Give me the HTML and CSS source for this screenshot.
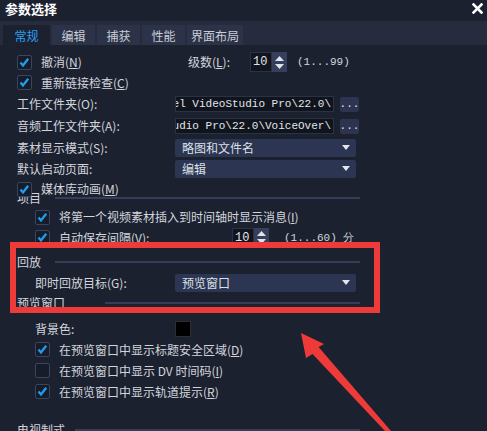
FILE: index.html
```html
<!DOCTYPE html>
<html lang="zh">
<head>
<meta charset="utf-8">
<title>参数选择</title>
<link rel="stylesheet" href="styles.css">
</head>
<body>
<div class="titlebar">
  <span class="title">参数选择</span>
  <svg class="close" width="11" height="11" viewBox="0 0 11 11"><path d="M1.5 1.5L9.5 9.5M9.5 1.5L1.5 9.5" stroke="#fff" stroke-width="2.6" stroke-linecap="square"/></svg>
</div>
<div class="tabbar">
  <div class="tab active t1">常规</div>
  <div class="tab t2">编辑</div>
  <div class="tab t2">捕获</div>
  <div class="tab t2">性能</div>
  <div class="tab t3">界面布局</div>
</div>
<div class="content">
  <div class="row h20">
    <span class="cb"><svg width="15" height="15" viewBox="0 0 15 15"><path d="M3.5 7.5L6 10.5L11.2 3.8" fill="none" stroke="#1e9df2" stroke-width="2.3"/></svg></span>
    <span class="lbl w147">撤消(<u>N</u>)</span>
    <span class="lbl w62">级数(<u>L</u>):</span>
    <span class="spin"><span class="spin-val">10</span><span class="spin-btn"><svg width="9" height="5" viewBox="0 0 9 5"><path d="M0 5L4.5 0L9 5Z" fill="#dfe3ea"/></svg><svg width="9" height="5" viewBox="0 0 9 5"><path d="M0 0L4.5 5L9 0Z" fill="#dfe3ea"/></svg></span></span>
    <span class="mono range">(1...99)</span>
  </div>
  <div class="row h21">
    <span class="cb"><svg width="15" height="15" viewBox="0 0 15 15"><path d="M3.5 7.5L6 10.5L11.2 3.8" fill="none" stroke="#1e9df2" stroke-width="2.3"/></svg></span>
    <span class="lbl">重新链接检查(<u>C</u>)</span>
  </div>
  <div class="row h22">
    <span class="flabel">工作文件夹(O):</span>
    <span class="path"><span>Corel VideoStudio Pro\22.0\</span></span>
    <span class="btn">...</span>
  </div>
  <div class="row h22">
    <span class="flabel">音频工作文件夹(A):</span>
    <span class="path"><span>Studio Pro\22.0\VoiceOver\</span></span>
    <span class="btn">...</span>
  </div>
  <div class="row h21">
    <span class="flabel">素材显示模式(S):</span>
    <span class="dd"><span>略图和文件名</span><svg width="8" height="5" viewBox="0 0 8 5"><path d="M0 0L4 5L8 0Z" fill="#e3e6ec"/></svg></span>
  </div>
  <div class="row h21">
    <span class="flabel">默认启动页面:</span>
    <span class="dd"><span>编辑</span><svg width="8" height="5" viewBox="0 0 8 5"><path d="M0 0L4 5L8 0Z" fill="#e3e6ec"/></svg></span>
  </div>
  <div class="row h20">
    <span class="cb"><svg width="15" height="15" viewBox="0 0 15 15"><path d="M3.5 7.5L6 10.5L11.2 3.8" fill="none" stroke="#1e9df2" stroke-width="2.3"/></svg></span>
    <span class="lbl">媒体库动画(<u>M</u>)</span>
  </div>
  <div class="grp g1">
    <span class="grp-label">项目</span><span class="grp-line"></span>
  </div>
  <div class="row h20 indent">
    <span class="cb"><svg width="15" height="15" viewBox="0 0 15 15"><path d="M3.5 7.5L6 10.5L11.2 3.8" fill="none" stroke="#1e9df2" stroke-width="2.3"/></svg></span>
    <span class="lbl">将第一个视频素材插入到时间轴时显示消息(<u>I</u>)</span>
  </div>
  <div class="row h21 indent">
    <span class="cb"><svg width="15" height="15" viewBox="0 0 15 15"><path d="M3.5 7.5L6 10.5L11.2 3.8" fill="none" stroke="#1e9df2" stroke-width="2.3"/></svg></span>
    <span class="lbl w173">自动保存间隔(<u>V</u>):</span>
    <span class="spin"><span class="spin-val">10</span><span class="spin-btn"><svg width="9" height="5" viewBox="0 0 9 5"><path d="M0 5L4.5 0L9 5Z" fill="#dfe3ea"/></svg><svg width="9" height="5" viewBox="0 0 9 5"><path d="M0 0L4.5 5L9 0Z" fill="#dfe3ea"/></svg></span></span>
    <span class="mono range2">(1...60) 分</span>
  </div>
  <div class="grp g2">
    <span class="grp-label">回放</span><span class="grp-line"></span>
  </div>
  <div class="row h21 indent">
    <span class="ilabel">即时回放目标(G):</span>
    <span class="dd"><span>预览窗口</span><svg width="8" height="5" viewBox="0 0 8 5"><path d="M0 0L4 5L8 0Z" fill="#e3e6ec"/></svg></span>
  </div>
  <div class="grp g3">
    <span class="grp-label wide">预览窗口</span><span class="grp-line"></span>
  </div>
  <div class="row h20 indent r-bg">
    <span class="ilabel">背景色:</span>
    <span class="swatch"></span>
  </div>
  <div class="row h21 indent">
    <span class="cb"><svg width="15" height="15" viewBox="0 0 15 15"><path d="M3.5 7.5L6 10.5L11.2 3.8" fill="none" stroke="#1e9df2" stroke-width="2.3"/></svg></span>
    <span class="lbl">在预览窗口中显示标题安全区域(<u>D</u>)</span>
  </div>
  <div class="row h21 indent">
    <span class="cb"></span>
    <span class="lbl">在预览窗口中显示 DV 时间码(<u>I</u>)</span>
  </div>
  <div class="row h21 indent">
    <span class="cb"><svg width="15" height="15" viewBox="0 0 15 15"><path d="M3.5 7.5L6 10.5L11.2 3.8" fill="none" stroke="#1e9df2" stroke-width="2.3"/></svg></span>
    <span class="lbl">在预览窗口中显示轨道提示(<u>R</u>)</span>
  </div>
  <div class="grp g4">
    <span class="grp-label wide">电视制式</span><span class="grp-line"></span>
  </div>
</div>
<div class="redbox"></div>
<svg class="arrow" width="487" height="431" viewBox="0 0 487 431"><polygon points="301,333 324,344 318.6,347 391,431 385,431 312.5,354 306,358" fill="#ef3a3a"/></svg>
</body>
</html>
```
FILE: styles.css
```css
html, body {
  margin: 0;
  padding: 0;
}
body {
  width: 487px;
  height: 431px;
  overflow: hidden;
  position: relative;
  background: #1c2130;
  color: #d2d5dc;
  font-family: "Noto Sans CJK SC", "Noto Sans", sans-serif;
  font-size: 12px;
  line-height: 16px;
}
u { text-decoration: underline; text-underline-offset: 1px; }

.titlebar {
  height: 17px;
  margin-bottom: 4px;
  display: flex;
  align-items: center;
  justify-content: space-between;
  padding: 0 4px 0 5px;
}
.title {
  color: #ffffff;
  font-weight: bold;
  font-size: 13px;
}
.close { display: block; }

.tabbar {
  height: 24px;
  box-sizing: border-box;
  padding: 4px 0 0 3px;
  background: #262c3e;
  display: flex;
  align-items: flex-end;
  gap: 2px;
}
.tab {
  height: 20px;
  box-sizing: border-box;
  padding-top: 2px;
  background: #2c3349;
  color: #c9cdd5;
  display: flex;
  align-items: center;
  justify-content: center;
}
.tab.t1 { width: 47px; }
.tab.t2 { width: 43px; }
.tab.t3 { width: 56px; }
.tab.active { background: #1c2130; color: #2a9ef2; }

.content {
  padding: 7px 0 0 17px;
}
.row {
  display: flex;
  align-items: center;
  white-space: nowrap;
}
.h20 { height: 20px; }
.h21 { height: 21px; }
.h22 { height: 22px; }
.indent { padding-left: 18px; }

.cb {
  width: 15px;
  height: 15px;
  box-sizing: border-box;
  border: 1px solid #3a4360;
  border-radius: 2px;
  background: #171c29;
  margin-right: 9px;
  flex-shrink: 0;
  position: relative;
}
.cb svg { position: absolute; left: -1px; top: -1px; }

.w147 { width: 147px; }
.w62 { width: 62px; }
.w173 { width: 173px; }
.flabel { width: 158px; }
.ilabel { width: 140px; }

.mono { font-family: "Liberation Mono", "DejaVu Sans Mono", monospace; font-size: 11px; }
.range { margin-left: 10px; }
.range2 { margin-left: 15px; }

.spin {
  display: flex;
  height: 20px;
}
.spin-val {
  width: 22px;
  box-sizing: border-box;
  background: #11151f;
  border: 1px solid #2b3245;
  font-family: "Liberation Mono", monospace;
  font-size: 12px;
  color: #e0e3e8;
  padding-left: 2px;
  display: flex;
  align-items: center;
}
.spin-btn {
  width: 15px;
  background: #36405d;
  display: flex;
  flex-direction: column;
  align-items: center;
  justify-content: center;
  gap: 3px;
}
.spin-btn svg { display: block; }

.path {
  width: 159px;
  height: 16px;
  box-sizing: border-box;
  background: #10141d;
  border: 1px solid #2b3245;
  display: flex;
  justify-content: flex-end;
  align-items: center;
  overflow: hidden;
  padding-right: 2px;
  font-family: "Liberation Mono", monospace;
  font-size: 11px;
  color: #e2e5ea;
}
.path span { flex-shrink: 0; }
.btn {
  margin-left: 6px;
  width: 19px;
  height: 15px;
  background: #2c3450;
  border-radius: 2px;
  display: flex;
  align-items: center;
  justify-content: center;
  font-family: "Liberation Mono", monospace;
  font-size: 11px;
  color: #e2e5ea;
}
.dd {
  width: 181px;
  height: 18px;
  box-sizing: border-box;
  background: #2c3551;
  border-radius: 2px;
  display: flex;
  align-items: center;
  justify-content: space-between;
  padding: 0 6px 0 7px;
  color: #dde0e6;
  font-size: 12px;
}
.dd svg { display: block; }

.grp {
  width: 343px;
  display: flex;
  align-items: center;
}
.grp-label { width: 38px; flex-shrink: 0; white-space: nowrap; }
.grp-label.wide { width: 88px; }
.grp-line {
  flex: 1;
  height: 2px;
  background: #363e57;
}
.g1 { height: 19px; margin-top: -11px; }
.g2 { height: 20px; margin-top: 4px; }
.g3 { height: 20px; }
.g4 { height: 20px; margin-top: 18px; }
.g4 .grp-label { width: 58px; }
.r-bg { margin-top: 6px; }

.swatch {
  width: 16px;
  height: 16px;
  box-sizing: border-box;
  background: #000;
  border: 1px solid #2e2e2e;
}

.redbox {
  position: absolute;
  left: 10px;
  top: 242px;
  width: 370px;
  height: 71px;
  box-sizing: border-box;
  border: 6px solid #ef3a3a;
}
.arrow {
  position: absolute;
  left: 0;
  top: 0;
}
```
